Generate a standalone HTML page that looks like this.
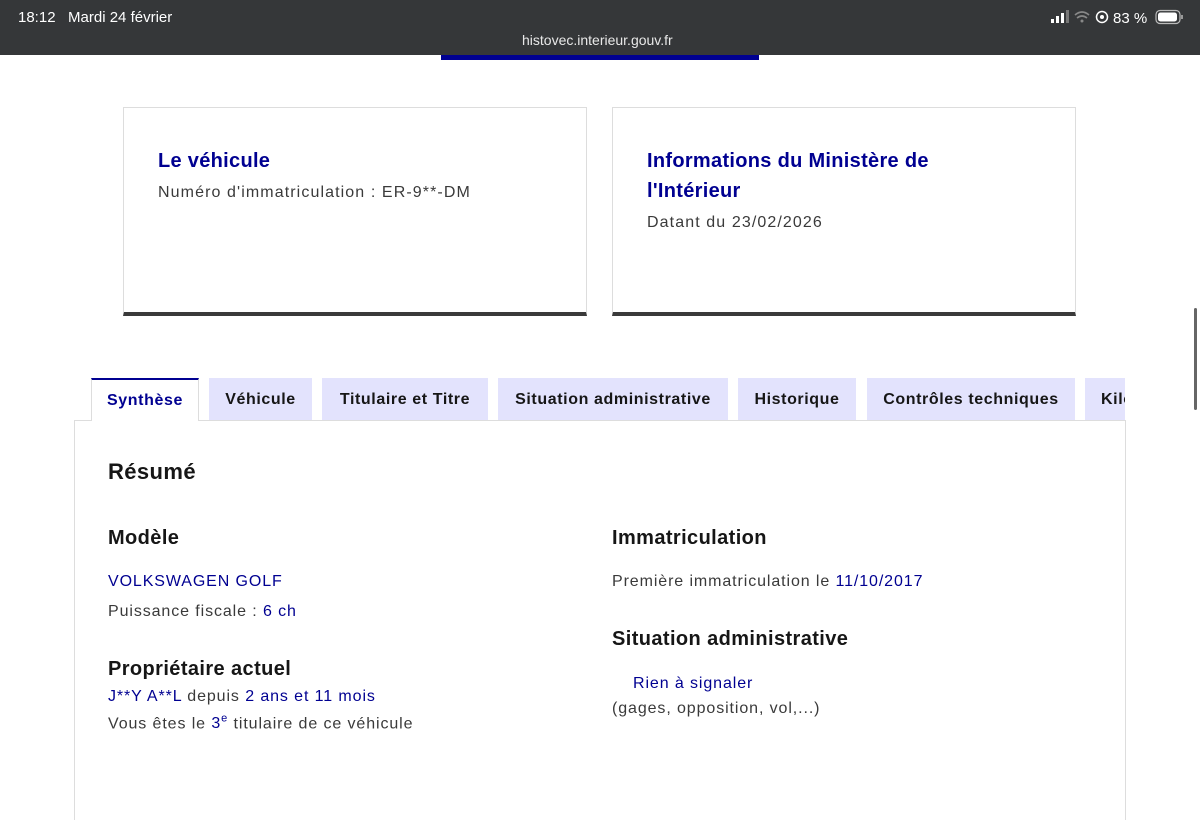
<!DOCTYPE html>
<html><head><meta charset="utf-8"><style>
*{margin:0;padding:0;box-sizing:border-box}
body{width:1200px;height:788px;overflow:hidden;background:#fff;font-family:"Liberation Sans",sans-serif;position:relative;color:#161616}
.top{position:absolute;left:0;top:0;width:1200px;height:55px;background:#353739;color:#fff}
.abs{position:absolute;white-space:nowrap}
.card{position:absolute;top:107px;width:464px;height:209px;border:1px solid #ddd;border-bottom:4px solid #3a3a3a;background:#fff}
.card h2{position:absolute;left:34px;top:38px;font-size:20px;color:#000091;font-weight:bold;line-height:30px;letter-spacing:0.3px}
.card p{position:absolute;left:34px;font-size:16px;color:#3a3a3a;letter-spacing:1.1px}
.tab{position:absolute;top:378px;height:42px;background:#e3e3fd;font-weight:bold;font-size:16px;line-height:44px;text-align:center;color:#161616;letter-spacing:0.6px}
.panel{position:absolute;left:74px;top:420px;width:1052px;height:400px;border:1px solid #ddd;border-bottom:none}
h3{position:absolute;font-size:20px;font-weight:bold;color:#161616;letter-spacing:0.4px}
.t{position:absolute;font-size:16px;color:#3a3a3a;white-space:nowrap;letter-spacing:0.9px}
.b{color:#000091}
</style></head><body>
<div class="top">
<div class="abs" style="left:18px;top:9px;font-size:15px">18:12&nbsp;&nbsp; Mardi 24 février</div>
<div class="abs" style="left:522px;top:32px;font-size:14px;color:#e8e8e8">histovec.interieur.gouv.fr</div>
<svg class="abs" style="left:1050px;top:9px" width="135" height="18">
<rect x="1" y="10" width="3" height="4" fill="#fff"/><rect x="6" y="7" width="3" height="7" fill="#fff"/><rect x="11" y="4" width="3" height="10" fill="#fff"/><rect x="16" y="1" width="3" height="13" fill="#777"/>
<path d="M25 6 Q32 0 39 6 M27 9 Q32 5 37 9" stroke="#888" stroke-width="1.6" fill="none"/><circle cx="32" cy="12" r="1.5" fill="#888"/>
<circle cx="52" cy="8" r="5.5" stroke="#fff" stroke-width="1.5" fill="none"/><circle cx="52" cy="8" r="2" fill="#fff"/>
<text x="63" y="14" fill="#fff" font-size="15" font-family="Liberation Sans">83 %</text>
<rect x="106" y="1.5" width="24" height="13" rx="4" stroke="#bbb" stroke-width="1.2" fill="none"/><rect x="108" y="3.5" width="19" height="9" rx="2.5" fill="#fff"/><rect x="131" y="6" width="2" height="4" fill="#999"/>
</svg>
</div>
<div class="abs" style="left:441px;top:55px;width:318px;height:5px;background:#000091"></div>
<div class="card" style="left:123px"><h2>Le véhicule</h2><p style="top:76px">Numéro d'immatriculation : ER-9**-DM</p></div>
<div class="card" style="left:612px"><h2>Informations du Ministère de<br>l'Intérieur</h2><p style="top:106px">Datant du 23/02/2026</p></div>
<div class="panel"></div>
<div class="tab" style="left:91px;width:108px;background:#fff;border-top:2px solid #000091;border-left:1px solid #ddd;border-right:1px solid #ddd;color:#000091;height:43px;line-height:42px">Synthèse</div>
<div class="tab" style="left:209px;width:103px">Véhicule</div>
<div class="tab" style="left:322px;width:166px">Titulaire et Titre</div>
<div class="tab" style="left:498px;width:230px">Situation administrative</div>
<div class="tab" style="left:738px;width:118px">Historique</div>
<div class="tab" style="left:867px;width:208px">Contrôles techniques</div>
<div class="tab" style="left:1085px;width:40px;overflow:hidden;text-align:left;padding-left:16px">Kilométrage</div>
<h3 style="left:108px;top:459px;font-size:22px">Résumé</h3>
<h3 style="left:108px;top:527px">Modèle</h3>
<div class="t b" style="left:108px;top:573px">VOLKSWAGEN GOLF</div>
<div class="t" style="left:108px;top:603px">Puissance fiscale : <span class="b">6 ch</span></div>
<h3 style="left:108px;top:658px">Propriétaire actuel</h3>
<div class="t" style="left:108px;top:688px"><span class="b">J**Y A**L</span> depuis <span class="b">2 ans et 11 mois</span></div>
<div class="t" style="left:108px;top:713px">Vous êtes le <span class="b">3<sup style="font-size:11px">e</sup></span> titulaire de ce véhicule</div>
<h3 style="left:612px;top:527px">Immatriculation</h3>
<div class="t" style="left:612px;top:573px">Première immatriculation le <span class="b">11/10/2017</span></div>
<h3 style="left:612px;top:628px">Situation administrative</h3>
<div class="t b" style="left:633px;top:675px">Rien à signaler</div>
<div class="t" style="left:612px;top:700px">(gages, opposition, vol,...)</div>
<div class="abs" style="left:1194px;top:308px;width:3px;height:102px;background:#666;border-radius:2px"></div>
</body></html>
